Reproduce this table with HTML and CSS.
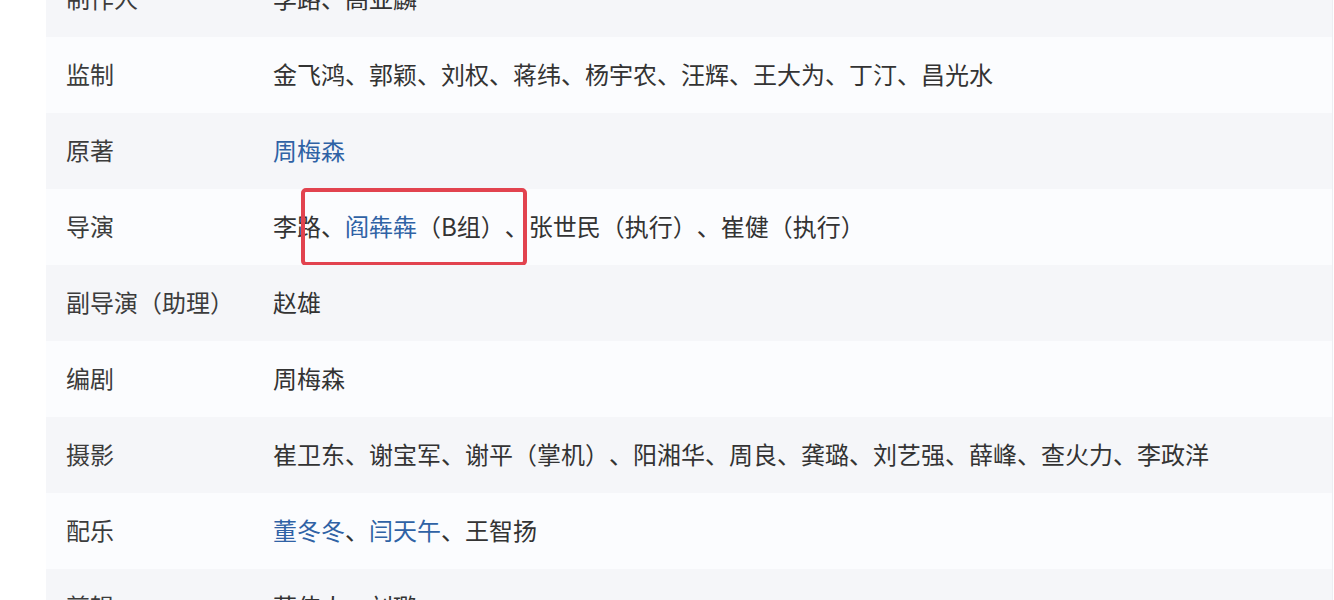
FILE: index.html
```html
<!DOCTYPE html>
<html lang="zh-CN">
<head>
    <meta charset="UTF-8">
    <meta name="viewport" content="width=device-width, initial-scale=1.0">
    <title>演职员表</title>
    <link rel="stylesheet" href="styles.css">
</head>
<body>

<!-- 演职员表 -->
<div class="crew-table">
    <div class="row shaded">
        <div class="label">制作人</div>
        <div class="value">李路、高亚麟</div>
    </div>
    <div class="row">
        <div class="label">监制</div>
        <div class="value">金飞鸿、郭颖、刘权、蒋纬、杨宇农、汪辉、王大为、丁汀、昌光水</div>
    </div>
    <div class="row shaded">
        <div class="label">原著</div>
        <div class="value"><a class="link" href="#">周梅森</a></div>
    </div>
    <div class="row">
        <div class="label">导演</div>
        <div class="value">李路、<a class="link" href="#">阎犇犇</a>（B组）、张世民（执行）、崔健（执行）</div>
        <div class="highlight"></div>
    </div>
    <div class="row shaded">
        <div class="label">副导演（助理）</div>
        <div class="value">赵雄</div>
    </div>
    <div class="row">
        <div class="label">编剧</div>
        <div class="value">周梅森</div>
    </div>
    <div class="row shaded">
        <div class="label">摄影</div>
        <div class="value">崔卫东、谢宝军、谢平（掌机）、阳湘华、周良、龚璐、刘艺强、薛峰、查火力、李政洋</div>
    </div>
    <div class="row">
        <div class="label">配乐</div>
        <div class="value"><a class="link" href="#">董冬冬</a>、<a class="link" href="#">闫天午</a>、王智扬</div>
    </div>
    <div class="row shaded">
        <div class="label">剪辑</div>
        <div class="value">蔡伟人、刘璐</div>
    </div>
</div>

</body>
</html>
```

FILE: styles.css
```css
body {
    margin: 0;
    background-color: #ffffff;
    font-family: "Noto Sans CJK SC", "Noto Sans", sans-serif;
    overflow: hidden;
}
.crew-table {
    margin-top: -39px;
    margin-left: 46px;
    width: 1286px;
    border-right: 1px solid #eceef2;
}
.row {
    position: relative;
    display: grid;
    grid-template-columns: 227px 1fr;
    align-items: center;
    box-sizing: border-box;
    height: 76px;
    padding-bottom: 3px;
    background-color: #fbfcfe;
    font-size: 24px;
    color: #333;
    text-spacing-trim: space-all;
}
.row.shaded {
    background-color: #f5f6f9;
}
.label {
    padding-left: 20px;
    color: #3c3c3c;
    white-space: nowrap;
}
.value {
    white-space: nowrap;
}
.link {
    color: #2f62a5;
    text-decoration: none;
}
/* red marker box drawn over the 导演 row */
.highlight {
    position: absolute;
    left: 255px;
    top: -1px;
    width: 218px;
    height: 70px;
    border: 4px solid #e2434f;
    border-radius: 5px;
}
```
